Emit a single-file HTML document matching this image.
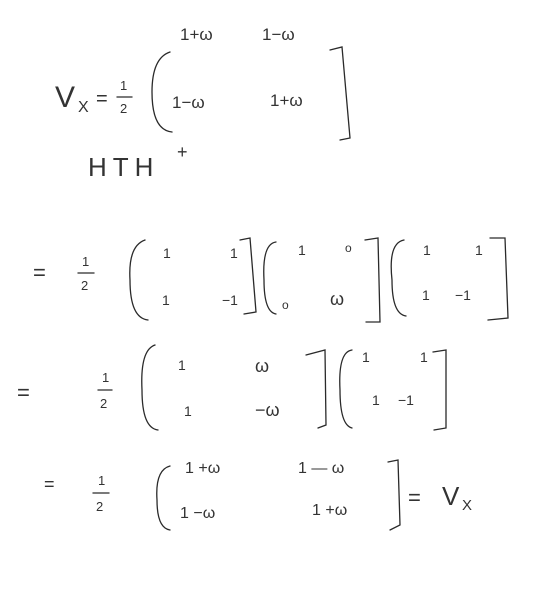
<!DOCTYPE html>
<html><head><meta charset="utf-8"><style>
html,body{margin:0;padding:0;background:#fff;width:552px;height:612px;overflow:hidden}
svg text{font-family:"Liberation Sans",sans-serif;fill:#333;font-weight:normal}
</style></head><body>
<svg width="552" height="612" viewBox="0 0 552 612" xmlns="http://www.w3.org/2000/svg" fill="none" stroke="#2a2a2a" stroke-width="1.3" stroke-linecap="round">
<!-- line 1 -->
<text x="55" y="107" font-size="30" stroke="none">V</text>
<text x="78" y="112" font-size="16" stroke="none">X</text>
<text x="96" y="105" font-size="20" stroke="none">=</text>
<text x="120" y="90" font-size="13" stroke="none">1</text>
<path d="M117 97 H132"/>
<text x="120" y="113" font-size="13" stroke="none">2</text>
<path d="M170 52 Q152 58 152 92 Q152 130 172 132"/>
<text x="180" y="40" font-size="17" stroke="none">1+ω</text>
<text x="262" y="40" font-size="17" stroke="none">1−ω</text>
<text x="172" y="108" font-size="17" stroke="none">1−ω</text>
<text x="270" y="106" font-size="17" stroke="none">1+ω</text>
<path d="M330 50 L342 47 L350 138 L340 140"/>
<!-- HTH -->
<text x="88" y="176" font-size="26" stroke="none" letter-spacing="6">HTH</text>
<text x="177" y="158" font-size="18" stroke="none">+</text>
<!-- line 3 -->
<text x="33" y="280" font-size="22" stroke="none">=</text>
<text x="82" y="266" font-size="13" stroke="none">1</text>
<path d="M78 273 H94"/>
<text x="81" y="290" font-size="13" stroke="none">2</text>
<path d="M145 240 Q128 246 130 280 Q130 318 148 320"/>
<text x="163" y="258" font-size="14" stroke="none">1</text>
<text x="230" y="258" font-size="14" stroke="none">1</text>
<text x="162" y="305" font-size="14" stroke="none">1</text>
<text x="222" y="305" font-size="14" stroke="none">−1</text>
<path d="M240 240 L250 238 L256 312 L244 314"/>
<path d="M276 242 Q262 244 264 280 Q264 312 276 314"/>
<text x="298" y="255" font-size="14" stroke="none">1</text>
<text x="345" y="252" font-size="12" stroke="none">o</text>
<text x="282" y="309" font-size="12" stroke="none">o</text>
<text x="330" y="305" font-size="18" stroke="none">ω</text>
<path d="M365 240 L378 238 L380 322 L366 322"/>
<path d="M404 240 Q388 243 392 280 Q392 314 406 316"/>
<text x="423" y="255" font-size="14" stroke="none">1</text>
<text x="475" y="255" font-size="14" stroke="none">1</text>
<text x="422" y="300" font-size="14" stroke="none">1</text>
<text x="455" y="300" font-size="14" stroke="none">−1</text>
<path d="M490 238 L505 238 L508 318 L488 320"/>
<!-- line 4 -->
<text x="17" y="400" font-size="22" stroke="none">=</text>
<text x="102" y="382" font-size="13" stroke="none">1</text>
<path d="M98 390 H112"/>
<text x="100" y="408" font-size="13" stroke="none">2</text>
<path d="M155 345 Q140 350 142 390 Q142 428 158 430"/>
<text x="178" y="370" font-size="14" stroke="none">1</text>
<text x="255" y="372" font-size="18" stroke="none">ω</text>
<text x="184" y="416" font-size="14" stroke="none">1</text>
<text x="255" y="416" font-size="18" stroke="none">−ω</text>
<path d="M306 355 L325 350 L326 425 L318 428"/>
<path d="M352 350 Q338 352 340 390 Q340 425 352 428"/>
<text x="362" y="362" font-size="14" stroke="none">1</text>
<text x="420" y="362" font-size="14" stroke="none">1</text>
<text x="372" y="405" font-size="14" stroke="none">1</text>
<text x="398" y="405" font-size="14" stroke="none">−1</text>
<path d="M433 352 L446 350 L446 428 L434 430"/>
<!-- line 5 -->
<text x="44" y="490" font-size="18" stroke="none">=</text>
<text x="98" y="485" font-size="13" stroke="none">1</text>
<path d="M93 493 H109"/>
<text x="96" y="511" font-size="13" stroke="none">2</text>
<path d="M170 466 Q155 470 157 500 Q157 528 170 530"/>
<text x="185" y="473" font-size="16" stroke="none">1 +ω</text>
<text x="298" y="473" font-size="16" stroke="none">1 — ω</text>
<text x="180" y="518" font-size="16" stroke="none">1  −ω</text>
<text x="312" y="515" font-size="16" stroke="none">1 +ω</text>
<path d="M388 462 L398 460 L400 525 L390 530"/>
<text x="408" y="505" font-size="22" stroke="none">=</text>
<text x="442" y="505" font-size="26" stroke="none">V</text>
<text x="462" y="510" font-size="15" stroke="none">X</text>
</svg>
</body></html>
